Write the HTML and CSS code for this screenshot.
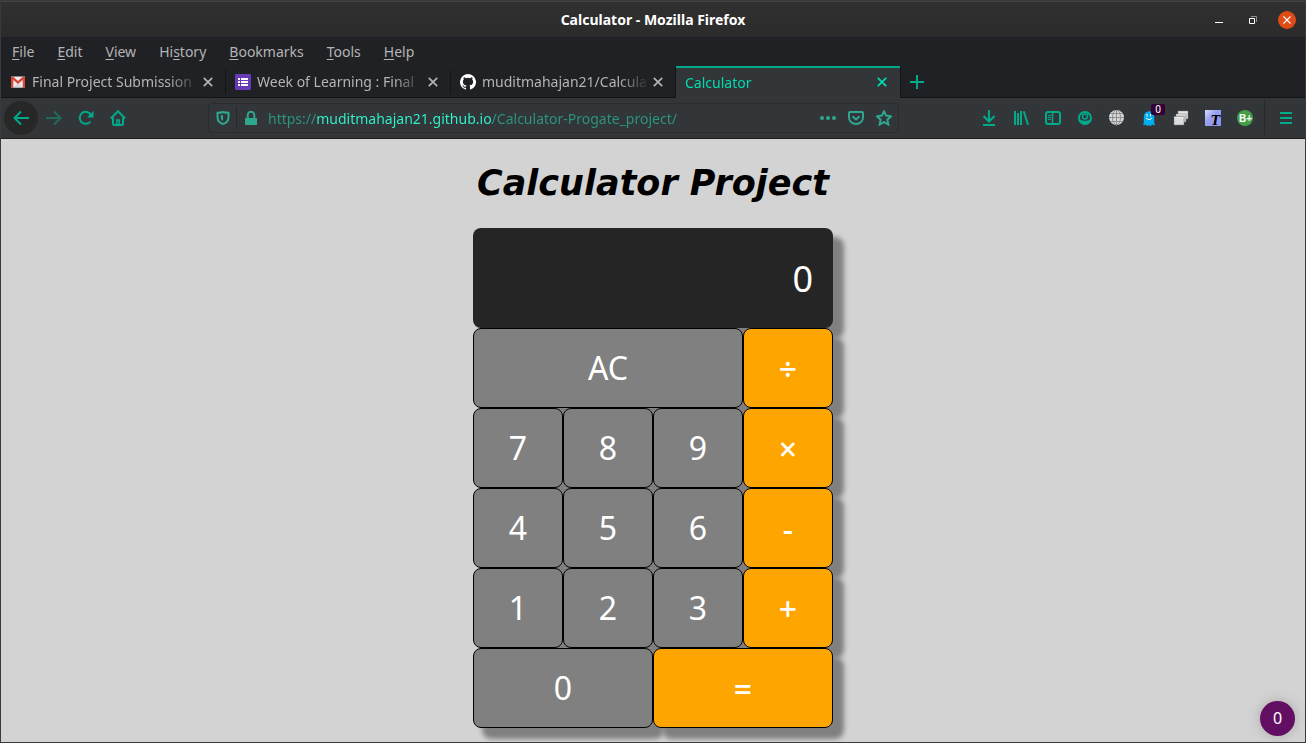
FILE: index.html
```html
<!DOCTYPE html>
<html lang="en">
<head>
<meta charset="utf-8">
<meta name="viewport" content="width=device-width, initial-scale=1">
<title>Calculator</title>
<link rel="stylesheet" href="styles.css">
</head>
<body>
<div class="window">
  <header class="titlebar">
    <span class="window-title">Calculator - Mozilla Firefox</span>
    <div class="window-controls">
      <button class="window-button" aria-label="Minimize"><svg width="8" height="8" viewBox="0 0 8 8"><path d="M0 6h8v1H0z" fill="#fff"/></svg></button>
      <button class="window-button" aria-label="Restore"><svg width="8" height="8" viewBox="0 0 8 8" fill="none"><path d="M2 .5h5.500v5.500" stroke="#8c8c8c"/><path d="M.5 2.500h5v5h-5z" stroke="#fff"/></svg></button>
      <button class="window-button window-close" aria-label="Close"><svg width="8" height="8" viewBox="0 0 8 8"><path d="M.5.5l7 7M7.500.5l-7 7" stroke="#fff" stroke-width="1.200"/></svg></button>
    </div>
  </header>

  <nav class="menubar" aria-label="Menu bar">
    <button class="menu"><u>F</u>ile</button>
    <button class="menu"><u>E</u>dit</button>
    <button class="menu"><u>V</u>iew</button>
    <button class="menu">Hi<u>s</u>tory</button>
    <button class="menu"><u>B</u>ookmarks</button>
    <button class="menu"><u>T</u>ools</button>
    <button class="menu"><u>H</u>elp</button>
  </nav>

  <div class="tabs">
    <div class="tab">
      <svg class="favicon" width="16" height="16" viewBox="0 0 16 16"><path d="M1 2.500h14v11H1z" fill="#eee"/><path d="M3.500 13.500L8 8.500l4.500 5z" fill="#d8d8d8"/><path d="M1 2.500h2l5 4.500 5-4.500h2v11h-2.300V6L8 10 3.300 6v7.500H1z" fill="#d9483b"/></svg>
      <button class="tab-label">Final Project Submission</button>
      <button class="tab-close" aria-label="Close tab"><svg width="10" height="10" viewBox="0 0 10 10"><path d="M.8.8l8.400 8.400M9.200.8L.8 9.200" stroke="currentColor" stroke-width="1.700"/></svg></button>
    </div>
    <div class="tab">
      <svg class="favicon" width="16" height="16" viewBox="0 0 16 16"><rect width="16" height="16" rx="1" fill="#673ab7"/><path d="M3 4h2v2H3zM3 7h2v2H3zM3 10h2v2H3zM6 4h7v2H6zM6 7h7v2H6zM6 10h7v2H6z" fill="#fff"/></svg>
      <button class="tab-label">Week of Learning : Final</button>
      <button class="tab-close" aria-label="Close tab"><svg width="10" height="10" viewBox="0 0 10 10"><path d="M.8.8l8.400 8.400M9.200.8L.8 9.200" stroke="currentColor" stroke-width="1.700"/></svg></button>
    </div>
    <div class="tab">
      <svg class="favicon" width="16" height="16" viewBox="0 0 16 16"><path fill="#fff" d="M8 0a8 8 0 0 0-2.530 15.590c.4.070.55-.170.55-.380v-1.490c-2.230.480-2.690-.940-2.690-.940-.360-.920-.890-1.170-.890-1.170-.730-.500.050-.490.050-.490.800.060 1.230.830 1.230.830.710 1.220 1.870.870 2.330.660.070-.520.280-.870.500-1.070-1.770-.200-3.640-.890-3.640-3.950 0-.880.310-1.590.820-2.150-.080-.200-.360-1.020.080-2.120 0 0 .670-.210 2.200.820a7.600 7.600 0 0 1 4 0c1.530-1.040 2.200-.820 2.200-.820.440 1.100.160 1.920.080 2.120.510.560.820 1.270.820 2.150 0 3.070-1.870 3.750-3.650 3.950.290.250.540.730.540 1.480v2.190c0 .210.150.460.550.380A8 8 0 0 0 8 0z"/></svg>
      <button class="tab-label">muditmahajan21/Calcula</button>
      <button class="tab-close" aria-label="Close tab"><svg width="10" height="10" viewBox="0 0 10 10"><path d="M.8.8l8.400 8.400M9.200.8L.8 9.200" stroke="currentColor" stroke-width="1.700"/></svg></button>
    </div>
    <div class="tab tab-active">
      <button class="tab-label">Calculator</button>
      <button class="tab-close" aria-label="Close tab"><svg width="10" height="10" viewBox="0 0 10 10"><path d="M.8.8l8.400 8.400M9.200.8L.8 9.200" stroke="currentColor" stroke-width="1.700"/></svg></button>
    </div>
    <button class="new-tab" aria-label="New tab"><svg width="14" height="14" viewBox="0 0 14 14"><path d="M7 0v14M0 7h14" stroke="currentColor" stroke-width="2"/></svg></button>
  </div>

  <div class="toolbar">
    <button class="tool tool-back" aria-label="Back"><svg width="16" height="16" viewBox="0 0 16 16" class="line"><path d="M16 8H1.500M8 1.500L1.500 8 8 14.500"/></svg></button>
    <button class="tool" aria-label="Forward" disabled><svg width="16" height="16" viewBox="0 0 16 16" class="line"><path d="M0 8h14.500M8 1.500L14.500 8 8 14.500"/></svg></button>
    <button class="tool" aria-label="Reload"><svg width="16" height="16" viewBox="0 0 16 16" class="line"><path d="M12.500 11.500A6 6 0 1 1 13 5"/><path d="M15.500 1v6.500H9z" fill="currentColor" stroke="none"/></svg></button>
    <button class="tool" aria-label="Home"><svg width="16" height="16" viewBox="0 0 16 16" class="line"><path d="M.8 8.500L8 1.300l7.200 7.200"/><path d="M3 7.500v6c0 .8.500 1.500 1.500 1.500h7c1 0 1.500-.7 1.500-1.500v-6"/><path d="M6.800 15v-5h2.500v5" stroke-width="1.500"/></svg></button>
    <div class="spacer"></div>
    <form class="urlbar">
      <button type="button" class="url-icon url-shield" aria-label="Tracking protection"><svg width="14" height="14" viewBox="0 0 14 14" class="line"><path d="M7 1C5.500 1.500 3.500 1.800 1.500 1.800V6c0 3.500 2 6 5.500 7 3.500-1 5.500-3.500 5.500-7V1.800C10.500 1.800 8.500 1.500 7 1z"/><path d="M7 4v6C5.500 9 4.800 8 4.800 6V4.300z" fill="currentColor" stroke="none"/></svg></button>
      <button type="button" class="url-icon url-lock" aria-label="Connection secure"><svg width="14" height="14" viewBox="0 0 14 14"><path d="M1 7h12v7H1z" fill="currentColor"/><path d="M3.700 7V4a3.300 3.300 0 0 1 6.600 0v3" fill="none" stroke="currentColor" stroke-width="2"/></svg></button>
      <input class="url" type="text" aria-label="Address" value="https://muditmahajan21.github.io/Calculator-Progate_project/" spellcheck="false">
      <button type="button" class="url-icon" aria-label="Page actions"><svg width="16" height="16" viewBox="0 0 16 16" fill="currentColor"><circle cx="2" cy="8" r="2"/><circle cx="8" cy="8" r="2"/><circle cx="14" cy="8" r="2"/></svg></button>
      <button type="button" class="url-icon" aria-label="Save to Pocket"><svg width="16" height="16" viewBox="0 0 16 16" class="line"><path d="M2 2h12c.6 0 1 .4 1 1v4.500a7 6.500 0 0 1-14 0V3c0-.6.4-1 1-1z"/><path d="M4.500 6.200L8 9.500l3.500-3.300"/></svg></button>
      <button type="button" class="url-icon" aria-label="Bookmark this page"><svg width="16" height="16" viewBox="0 0 16 16" class="line"><path d="M8 1.300l2.100 4.300 4.800.7-3.500 3.400.9 4.800L8 12.200l-4.300 2.300.9-4.800L1.100 6.300l4.800-.7z"/></svg></button>
    </form>
    <div class="spacer"></div>
    <button class="tool" aria-label="Downloads"><svg width="16" height="16" viewBox="0 0 16 16" class="line"><path d="M8 0v11M2.500 6L8 11.500 13.500 6M2 15h12"/></svg></button>
    <button class="tool" aria-label="Library"><svg width="16" height="16" viewBox="0 0 16 16" class="line"><path d="M2 1v14M5 3v12M8 1v14M10.700 1.300L15 14.800"/></svg></button>
    <button class="tool" aria-label="Sidebars"><svg width="16" height="16" viewBox="0 0 16 16" class="line"><rect x="1" y="2" width="14" height="12" rx="2"/><path d="M7.500 2v12" stroke-width="1.500"/><path d="M3 5.500h3M3 7.500h3M3 9.500h3" stroke-width="1"/></svg></button>
    <button class="tool" aria-label="Account"><svg width="16" height="16" viewBox="0 0 16 16" class="line"><circle cx="8" cy="8" r="6"/><circle cx="8" cy="6.500" r="2.500" stroke-width="1.500"/><path d="M3.500 9.500c1.500 1 2.500 1.200 4.500 1.200s3-.2 4.500-1.200C12 12 10.500 13.500 8 13.500S4 12 3.500 9.500z" fill="currentColor" stroke="none"/></svg></button>
    <button class="tool" aria-label="Globe extension"><svg width="16" height="16" viewBox="0 0 16 16"><circle cx="7.500" cy="7.500" r="7.500" fill="#d8d8d8"/><g fill="none" stroke="#8c8c8c"><path d="M7.500 0v15M0 7.500h15M1.500 3.500h12M1.500 11.500h12"/><ellipse cx="7.500" cy="7.500" rx="4" ry="7.500"/></g></svg></button>
    <button class="tool tool-badged" aria-label="Ghost extension"><svg width="16" height="16" viewBox="0 0 16 16"><path d="M2 15l.8-2V6.500a5.200 5.200 0 0 1 10.400 0V13l.8 2-2 .2-1-1-1 1.800H8.800L8 14.500 7.200 16H6l-1-1.800-1 1z" fill="#00aef0"/><path d="M5.500 4h1v2.500h-1zM9 4h1v2.500H9z" fill="#fff"/><path d="M5 8c1 2 5 2 6 0" fill="none" stroke="#fff"/></svg><span class="badge">0</span></button>
    <button class="tool" aria-label="Windows extension"><svg width="16" height="16" viewBox="0 0 16 16" stroke="#727272" stroke-width=".5"><path d="M5 1h10v8H5z" fill="#ddd"/><path d="M5 2h10" stroke="#fff"/><path d="M3 4h10v8H3z" fill="#ccc"/><path d="M3 4.800h10" stroke="#fff"/><path d="M1 6.500h10V15H1z" fill="#ddd"/><path d="M1 7.500h10" stroke="#fff"/></svg></button>
    <button class="tool" aria-label="Text extension"><svg width="16" height="16" viewBox="0 0 16 16"><defs><linearGradient id="sky" x1="0" y1="0" x2="1" y2="1"><stop offset="0" stop-color="#d6dcff"/><stop offset=".4" stop-color="#9aa2f2"/><stop offset="1" stop-color="#8a91e4"/></linearGradient></defs><path d="M0 0h16v16H0z" fill="url(#sky)"/><text class="letter-t" x="6" y="15">T</text></svg></button>
    <button class="tool" aria-label="B plus extension"><svg width="16" height="16" viewBox="0 0 16 16"><circle cx="8" cy="8" r="8" fill="#43a047"/><text class="letter-b" x="2" y="12">B+</text></svg></button>
    <button class="tool tool-menu" aria-label="Open menu"><svg width="12" height="12" viewBox="0 0 12 12"><path d="M0 0h12v2H0zM0 5h12v2H0zM0 10h12v2H0z" fill="currentColor"/></svg></button>
  </div>

  <main class="page">
    <h1 class="heading">Calculator Project</h1>
    <div class="calculator">
      <input class="screen" type="text" value="0" aria-label="Result" readonly>
      <button class="key key-clear">AC</button>
      <button class="key key-operator">÷</button>
      <button class="key">7</button>
      <button class="key">8</button>
      <button class="key">9</button>
      <button class="key key-operator">×</button>
      <button class="key">4</button>
      <button class="key">5</button>
      <button class="key">6</button>
      <button class="key key-operator">-</button>
      <button class="key">1</button>
      <button class="key">2</button>
      <button class="key">3</button>
      <button class="key key-operator">+</button>
      <button class="key key-wide">0</button>
      <button class="key key-operator key-wide">=</button>
    </div>
    <button class="counter" aria-label="Trackers found">0</button>
  </main>
</div>
</body>
</html>
```

FILE: styles.css
```css
* {
  box-sizing: border-box;
}

body {
  margin: 0;
  font-family: "Noto Sans", "Open Sans", sans-serif;
  font-size: 14px;
}

button,
input {
  margin: 0;
  padding: 0;
  border: 0;
  background: none;
  color: inherit;
  font: inherit;
}

.line {
  fill: none;
  stroke: currentColor;
  stroke-width: 2;
}

.window {
  display: flex;
  flex-direction: column;
  min-height: 100vh;
  border: 1px solid #3a3a3a;
  background: #202125;
}

/* Title bar */
.titlebar {
  display: grid;
  grid-template-columns: 1fr auto 1fr;
  align-items: center;
  height: 36px;
  border-top: 1px solid #424242;
  background: linear-gradient(#303030, #2b2b2b);
  color: #fff;
}

.window-title {
  grid-column: 2;
  font-weight: 700;
}

.window-controls {
  display: flex;
  justify-content: flex-end;
  gap: 16px;
  padding-right: 9px;
}

.window-button {
  display: grid;
  place-items: center;
  width: 18px;
  height: 18px;
  border-radius: 50%;
}

.window-close {
  background: #df4a16;
}

/* Menu bar */
.menubar {
  display: flex;
  gap: 23px;
  height: 29px;
  padding: 0 11px;
  color: #b4b4b4;
}

.menu u {
  text-underline-offset: 2px;
}

/* Tabs */
.tabs {
  display: flex;
  height: 32px;
  border-bottom: 1px solid #111214;
  color: #b4b4b4;
}

.tab {
  display: flex;
  flex: 0 1 225px;
  align-items: center;
  min-width: 0;
  padding: 0 13px 0 9px;
  background: linear-gradient(#131416, #131416) right / 1px 24px no-repeat;
}

.favicon {
  flex: none;
  margin-right: 6px;
}

.tab-label {
  flex: 1;
  min-width: 0;
  overflow: hidden;
  text-align: left;
  white-space: nowrap;
  mask-image: linear-gradient(to left, transparent, #000 30px);
}

.tab-close {
  display: grid;
  flex: none;
  place-items: center;
  margin-left: 4px;
}

.tab-active {
  height: 32px;
  margin-left: -1px;
  border-left: 1px solid #131416;
  background: #323639;
  box-shadow: inset 0 2px #00ab8b;
  color: #00dcb0;
}

.new-tab {
  display: grid;
  place-items: center;
  width: 33px;
  border-left: 1px solid #131416;
  color: #00ab8b;
}

/* Navigation toolbar */
.toolbar {
  display: flex;
  align-items: center;
  height: 41px;
  padding: 0 3px;
  border-bottom: 1px solid #1a1c1e;
  background: #323639;
  color: #00ab8b;
}

.tool {
  display: grid;
  flex: none;
  place-items: center;
  width: 32px;
  height: 34px;
}

.tool:disabled {
  color: #1f6b5e;
}

.tool-back {
  width: 34px;
  border-radius: 50%;
  background: #272727;
}

.tool-badged {
  position: relative;
}

.badge {
  position: absolute;
  top: 3px;
  right: 0;
  width: 14px;
  border-radius: 2px;
  background: #330033;
  color: #fff;
  font-size: 10px;
  line-height: 11px;
}

.letter-t {
  font: italic 700 12px "DejaVu Serif", serif;
}

.letter-b {
  fill: #fff;
  font: 700 10px "Liberation Sans", sans-serif;
}

.tool-menu {
  width: 38px;
  padding-left: 4px;
  margin-left: 3px;
  border-left: 1px solid #26292b;
}

.spacer {
  flex: 1;
}

.urlbar {
  display: flex;
  flex: 0 1 691px;
  align-items: center;
  min-width: 0;
  height: 30px;
  border: 1px solid #292c2f;
  border-radius: 4px;
  color: #2fa78f;
}

.url-icon {
  display: grid;
  flex: none;
  place-items: center;
  width: 28px;
  height: 22px;
}

.url-shield {
  border-right: 1px solid #26292b;
}

.url {
  flex: 1;
  min-width: 0;
  margin-left: 3px;
  outline: 0;
  background: linear-gradient(to right, #2b9580 49px, #2ff5cb 49px 224px, #2b9580 224px);
  background-clip: text;
  color: transparent;
}

/* Page */
.page {
  position: relative;
  display: flex;
  flex: 1;
  flex-direction: column;
  align-items: center;
  padding: 23px 0 14px;
  background: #d3d3d3;
}

.heading {
  margin: 0 0 24px;
  font: italic 700 35px/42px "DejaVu Sans", sans-serif;
}

.calculator {
  display: grid;
  grid-template-columns: repeat(4, 90px);
  grid-template-rows: 100px;
  grid-auto-rows: 80px;
  color: #fff;
  font-size: 32px;
}

.screen,
.key {
  border-radius: 8px;
  box-shadow: 10px 10px 5px 1px #808080;
}

.screen {
  grid-column: 1 / -1;
  width: 100%;
  padding: 0 20px;
  background: #252525;
  font-size: 36px;
  text-align: right;
}

.key {
  padding-bottom: 2px;
  border: 1px solid #000;
  background: #808080;
}

.key-operator {
  padding-bottom: 0;
  background: #ffa500;
  font-weight: 500;
}

.key-clear {
  grid-column: span 3;
}

.key-wide {
  grid-column: span 2;
}

.counter {
  position: absolute;
  right: 10px;
  bottom: 6px;
  width: 35px;
  height: 35px;
  padding-bottom: 2px;
  border-radius: 50%;
  background: #620f63;
  box-shadow: 0 0 12px #a8a8a8;
  color: #fff;
  font-size: 16px;
}
```
